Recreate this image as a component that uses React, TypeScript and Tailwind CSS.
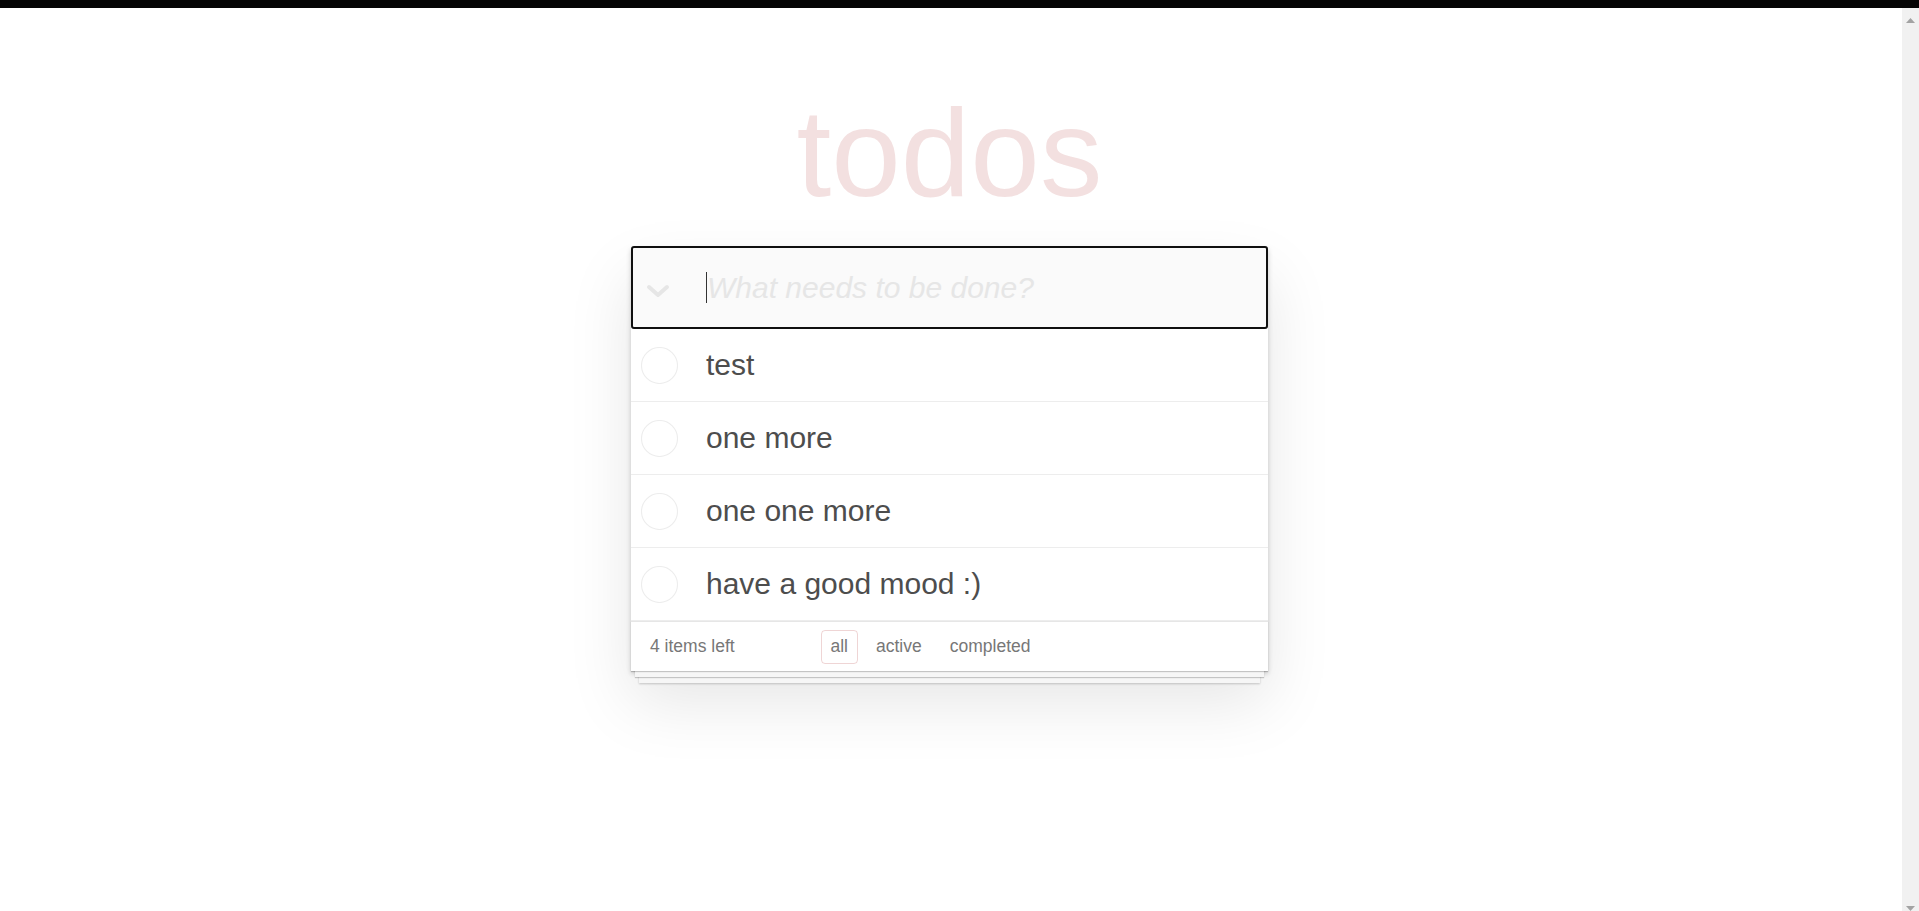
export default function App() {
  const items = ["test", "one more", "one one more", "have a good mood :)"];
  return (
    <div className="h-screen w-full flex flex-col bg-white overflow-hidden font-['Liberation_Sans',Arial,sans-serif]">
      <div className="h-[8px] w-full bg-[#050505] shrink-0" />
      <div className="flex flex-1 min-h-0">
        <main className="flex-1 flex flex-col items-center pr-[3px] pt-[82px]">
          <h1 className="w-[637px] h-[125px] text-[125px] leading-[125px] text-center font-thin text-[rgba(175,47,47,0.15)]">
            todos
          </h1>
          <section className="mt-[31px] w-[637px] bg-white shadow-[0_2.5px_5px_0_rgba(0,0,0,0.2),0_31px_62px_0_rgba(0,0,0,0.1)]">
            <header className="relative h-[83px] border-2 border-[#101010] rounded-[3px] bg-[#fafafa] flex items-center">
              <svg
                className="absolute left-[13px] top-[36px]"
                width="24"
                height="14"
                viewBox="0 0 24 14"
                fill="none"
              >
                <polyline
                  points="3,3 12,11 21,3"
                  stroke="#e6e6e6"
                  strokeWidth="4"
                  strokeLinecap="round"
                  strokeLinejoin="round"
                />
              </svg>
              <div className="pl-[73px] flex items-center">
                <span className="w-px h-[31px] bg-[#333]" />
                <span className="text-[30px] italic font-light text-[#e6e6e6] leading-[42px]">
                  What needs to be done?
                </span>
              </div>
            </header>
            <ul>
              {items.map((t) => (
                <li
                  key={t}
                  className="h-[73px] border-b border-[#ededed] flex items-center pl-[10px]"
                >
                  <svg width="37" height="37" viewBox="0 0 37 37" className="shrink-0">
                    <circle cx="18.5" cy="18.5" r="18" fill="none" stroke="#ededed" strokeWidth="1.1" />
                  </svg>
                  <span className="ml-[28px] text-[30px] leading-[36px] text-[#4d4d4d]">{t}</span>
                </li>
              ))}
            </ul>
            <footer className="relative h-[50px] border-t border-[#e6e6e6] bg-white flex items-center pl-[19px] text-[17.5px] leading-[24.5px] text-[#777] shadow-[0_1px_1px_rgba(0,0,0,0.2),0_10px_0_-4px_#f6f6f6,0_11px_1px_-4px_rgba(0,0,0,0.2),0_20px_0_-8px_#f6f6f6,0_21px_2px_-8px_rgba(0,0,0,0.2)]">
              <span className="w-[168px] shrink-0">4 items left</span>
              <ul className="flex items-center gap-[9px] ml-[3px]">
                <li className="px-[8.5px] py-[3.75px] border border-[rgba(175,47,47,0.2)] rounded-[4px]">all</li>
                <li className="px-[8.5px] py-[3.75px] border border-transparent rounded-[4px]">active</li>
                <li className="px-[8.5px] py-[3.75px] border border-transparent rounded-[4px]">completed</li>
              </ul>
            </footer>
          </section>
        </main>
        <div className="w-[17px] shrink-0 bg-[#f1f1f1] flex flex-col justify-between items-center pt-[10px]">
          <svg width="9" height="5" viewBox="0 0 9 5">
            <polygon points="4.5,0 9,5 0,5" fill="#a3a3a3" />
          </svg>
          <svg width="9" height="5" viewBox="0 0 9 5">
            <polygon points="0,0 9,0 4.5,5" fill="#a3a3a3" />
          </svg>
        </div>
      </div>
    </div>
  );
}
